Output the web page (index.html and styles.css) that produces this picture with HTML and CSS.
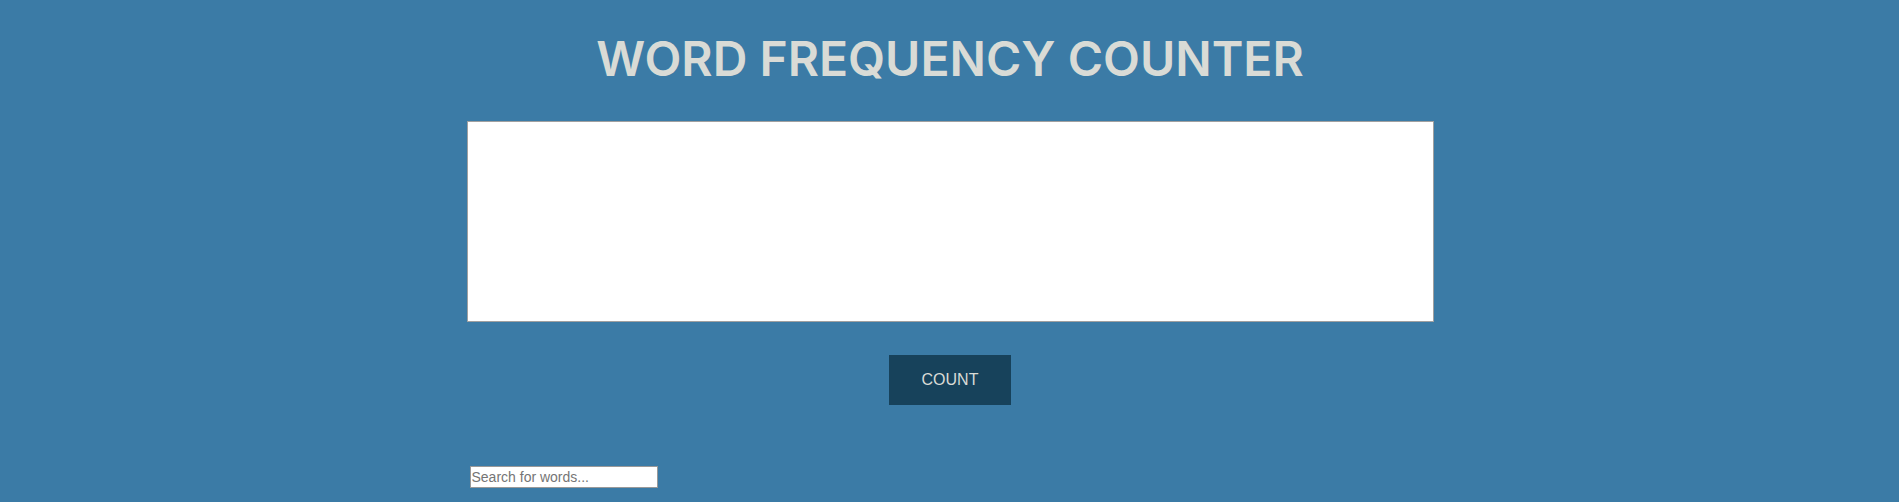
FILE: index.html
```html
<!DOCTYPE html>
<html>
<head>
<meta charset="utf-8">
<link rel="stylesheet" href="styles.css">
</head>
<body>
<main class="app">
  <h1 class="title">WORD FREQUENCY COUNTER</h1>
  <textarea class="text-input"></textarea>
  <button class="count-btn">COUNT</button>
  <div class="search-row">
    <input class="search" type="text" placeholder="Search for words...">
  </div>
</main>
</body>
</html>
```
FILE: styles.css
```css
html, body {
  margin: 0;
  padding: 0;
  background: #3b7ba6;
  height: 100%;
}
.app {
  display: flex;
  flex-direction: column;
  align-items: center;
  padding-top: 29px;
  padding-left: 1px;
}
.title {
  margin: 0;
  font-family: Inter, "Liberation Sans", sans-serif;
  font-weight: 600;
  font-size: 48px;
  line-height: 59px;
  color: #d9dbd6;
}
.text-input {
  box-sizing: border-box;
  width: 967px;
  height: 201px;
  margin-top: 33px;
  border: 1px solid #a0a0a0;
  background: #fff;
  resize: none;
  padding: 2px;
}
.count-btn {
  margin-top: 33px;
  width: 122px;
  height: 50px;
  border: none;
  background: #17425b;
  color: #d9dbd6;
  font-family: "Liberation Sans", Arial, sans-serif;
  font-size: 16px;
}
.search-row {
  width: 967px;
  margin-top: 61px;
  padding-left: 3px;
  box-sizing: border-box;
}
.search {
  box-sizing: border-box;
  width: 188px;
  height: 22px;
  border: 1px solid #999;
  font-family: "Liberation Sans", Arial, sans-serif;
  font-size: 14px;
  padding: 1px 1px;
}
.search::placeholder {
  color: #757575;
}
```
